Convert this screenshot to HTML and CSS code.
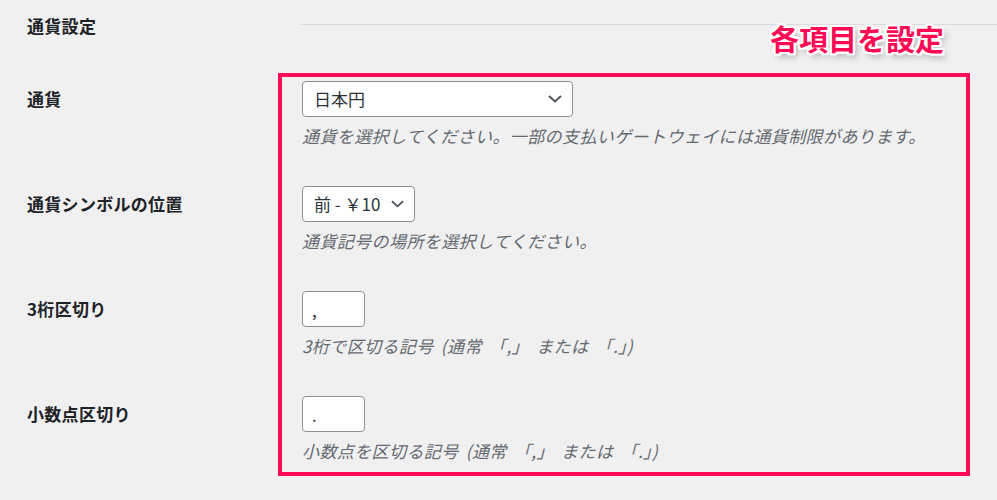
FILE: index.html
```html
<!DOCTYPE html>
<html lang="ja">
<head>
    <meta charset="UTF-8">
    <meta name="viewport" content="width=device-width, initial-scale=1.0">
    <title>通貨設定</title>
    <link rel="stylesheet" href="styles.css">
</head>
<body>
    <div class="page">
        <div class="section-head">
            <h2>通貨設定</h2>
            <span class="rule"></span>
        </div>

        <div class="note">各項目を設定</div>

        <div class="form">
            <div class="frame"></div>

            <div class="row">
                <div class="label">通貨</div>
                <div class="field">
                    <div class="select select-wide">
                        <span>日本円</span>
                        <svg class="chevron" viewBox="0 0 14 8" width="14" height="8"><path d="M1 1l6 5.5L13 1" fill="none" stroke="#50575e" stroke-width="2"/></svg>
                    </div>
                    <p class="desc">通貨を選択してください。一部の支払いゲートウェイには通貨制限があります。</p>
                </div>
            </div>

            <div class="row">
                <div class="label">通貨シンボルの位置</div>
                <div class="field">
                    <div class="select select-small">
                        <span>前 - ￥10</span>
                        <svg class="chevron" viewBox="0 0 14 8" width="13" height="8"><path d="M1 1l6 5.5L13 1" fill="none" stroke="#50575e" stroke-width="2"/></svg>
                    </div>
                    <p class="desc">通貨記号の場所を選択してください。</p>
                </div>
            </div>

            <div class="row">
                <div class="label">3桁区切り</div>
                <div class="field">
                    <input class="text-input" type="text" value=",">
                    <p class="desc">3桁で区切る記号 (通常 「,」 または 「.」)</p>
                </div>
            </div>

            <div class="row">
                <div class="label">小数点区切り</div>
                <div class="field">
                    <input class="text-input" type="text" value=".">
                    <p class="desc">小数点を区切る記号 (通常 「,」 または 「.」)</p>
                </div>
            </div>
        </div>
    </div>
</body>
</html>
```

FILE: styles.css
```css
body {
    margin: 0;
    padding: 0;
    background-color: #f0f0f1;
    font-family: "Noto Sans CJK JP", "Noto Sans", sans-serif;
    font-size: 17px;
    color: #1d2327;
}

.page {
    position: relative;
    width: 997px;
    height: 500px;
    overflow: hidden;
}

.section-head {
    display: flex;
    align-items: flex-start;
    padding-top: 15px;
    margin-left: 27px;
    height: 22px;
    margin-bottom: 44px;
}

.section-head h2 {
    margin: 0;
    width: 273px;
    font-size: 17px;
    line-height: 22px;
    font-weight: 700;
    letter-spacing: 0.3px;
}

.rule {
    flex: 1;
    margin-top: 9px;
    border-top: 1px solid #dcdcde;
}

.note {
    position: absolute;
    top: 20px;
    left: 770px;
    font-size: 29px;
    line-height: 36px;
    font-weight: 700;
    color: #ff0a54;
    text-shadow:
        2px 0 0 #fff, -2px 0 0 #fff, 0 2px 0 #fff, 0 -2px 0 #fff,
        2px 2px 0 #fff, -2px -2px 0 #fff, 2px -2px 0 #fff, -2px 2px 0 #fff,
        3px 4px 6px rgba(0, 0, 0, 0.35);
}

.form {
    position: relative;
}

.frame {
    position: absolute;
    top: -8px;
    left: 278px;
    width: 692px;
    height: 403px;
    box-sizing: border-box;
    border: 4px solid #fe0a55;
    pointer-events: none;
}

.row {
    display: grid;
    grid-template-columns: 275px 1fr;
    margin-left: 27px;
    height: 105px;
}

.label {
    padding-top: 7px;
    line-height: 22px;
    font-weight: 700;
    letter-spacing: 0.3px;
}

.field {
    display: flex;
    flex-direction: column;
    align-items: flex-start;
}

.select {
    display: flex;
    align-items: center;
    justify-content: space-between;
    box-sizing: border-box;
    height: 36px;
    padding: 0 10px 0 11px;
    background-color: #fff;
    border: 1px solid #8c8f94;
    border-radius: 4px;
    color: #2c3338;
    line-height: 22px;
}

.select-wide {
    width: 271px;
}

.select-small {
    width: 113px;
}

.chevron {
    display: block;
}

.text-input {
    box-sizing: border-box;
    width: 63px;
    height: 36px;
    margin: 0;
    padding: 0 9px;
    background-color: #fff;
    border: 1px solid #8c8f94;
    border-radius: 4px;
    font-family: inherit;
    font-size: 17px;
    color: #2c3338;
}

.desc {
    margin: 8px 0 0;
    line-height: 22px;
    font-style: italic;
    letter-spacing: 0.4px;
    word-spacing: 3px;
    color: #646970;
}
```
